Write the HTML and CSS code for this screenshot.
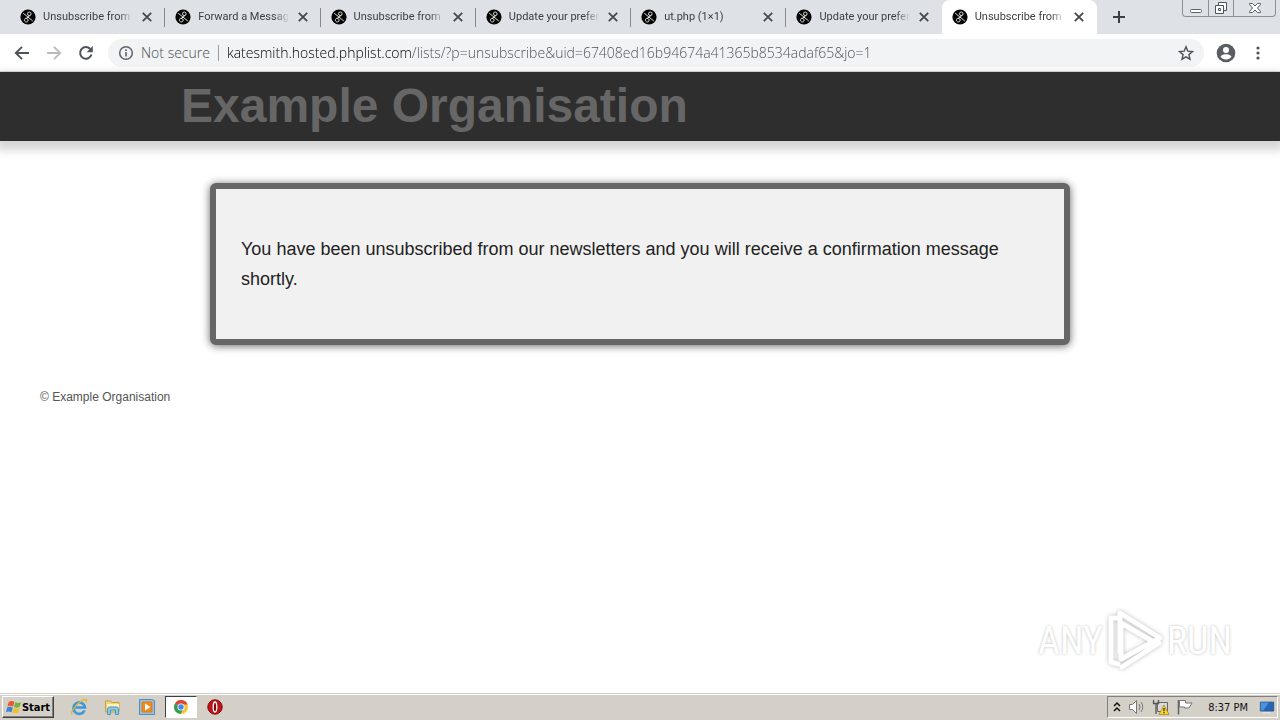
FILE: index.html
```
<!DOCTYPE html>
<html lang="en">
<head>
<meta charset="utf-8">
<title>Unsubscribe from our newsletters</title>
<link rel="stylesheet" href="styles.css">
</head>
<body>
<svg class="defs" aria-hidden="true">
  <symbol id="fav" viewBox="0 0 16 16"><circle cx="8" cy="8" r="7.6" fill="#050505"/><g fill="none" stroke="#dcdcdc" stroke-width="1"><circle cx="9.3" cy="4.8" r="1.8"/><path d="M3.2 4.2L12.8 12M10.2 6.3L6 9.7M6 9.2a1.9 1.9 0 1 0 2 2.8c.7-1.5-.7-2.8-2-2.8"/></g></symbol>
  <symbol id="x" viewBox="0 0 10 10"><path d="M1.5 1.5l7 7M8.500 1.5l-7 7" stroke="#45484d" stroke-width="1.5" fill="none"/></symbol>
</svg>
<header class="browser">
  <div class="strip">
    <nav class="tabs" aria-label="Open tabs">
      <div class="tab"><svg class="fav"><use href="#fav"/></svg><span class="name">Unsubscribe from our</span><button class="close" aria-label="Close tab"><svg><use href="#x"/></svg></button></div>
      <div class="tab"><svg class="fav"><use href="#fav"/></svg><span class="name">Forward a Message to</span><button class="close" aria-label="Close tab"><svg><use href="#x"/></svg></button></div>
      <div class="tab"><svg class="fav"><use href="#fav"/></svg><span class="name">Unsubscribe from our</span><button class="close" aria-label="Close tab"><svg><use href="#x"/></svg></button></div>
      <div class="tab"><svg class="fav"><use href="#fav"/></svg><span class="name">Update your preferences</span><button class="close" aria-label="Close tab"><svg><use href="#x"/></svg></button></div>
      <div class="tab"><svg class="fav"><use href="#fav"/></svg><span class="name">ut.php (1×1)</span><button class="close" aria-label="Close tab"><svg><use href="#x"/></svg></button></div>
      <div class="tab last"><svg class="fav"><use href="#fav"/></svg><span class="name">Update your preferences</span><button class="close" aria-label="Close tab"><svg><use href="#x"/></svg></button></div>
      <div class="tab active"><svg class="fav"><use href="#fav"/></svg><span class="name">Unsubscribe from our</span><button class="close" aria-label="Close tab"><svg><use href="#x"/></svg></button></div>
    </nav>
    <button class="new-tab" aria-label="New tab"><svg width="14" height="14" viewBox="0 0 14 14"><path d="M7 1v12M1 7h12" stroke="#3c4043" stroke-width="2"/></svg></button>
    <div class="window-controls">
      <button aria-label="Minimize"><svg width="14" height="14" viewBox="0 0 14 14"><rect x="1.500" y="8.500" width="11" height="3" rx="1" fill="#fff" stroke="#5c626c"/></svg></button>
      <button aria-label="Restore"><svg width="14" height="14" viewBox="0 0 14 14"><g fill="#fff" stroke="#4e545e"><path d="M4.500 1.500h8v8h-8z"/><path d="M1.500 4.500h8v8h-8z"/><path d="M4.500 7.500h2v2h-2z"/></g></svg></button>
      <button class="wide" aria-label="Close window"><svg width="14" height="14" viewBox="0 0 14 14"><path d="M1.500 2.500h3L7 5l2.500-2.500h3v1L9.500 7l3 3.500v1h-3L7 9l-2.500 2.500h-3v-1l3-3.500-3-3.500z" fill="#fff" stroke="#5c626c"/></svg></button>
    </div>
  </div>
  <div class="toolbar">
    <button aria-label="Back"><svg width="16" height="16" viewBox="0 0 16 16"><path d="M15 8H2.500M8 1.800L1.800 8 8 14.200" fill="none" stroke="#4f5358" stroke-width="1.900"/></svg></button>
    <button aria-label="Forward"><svg width="16" height="16" viewBox="0 0 16 16"><path d="M1 8h12.500M8 1.800L14.200 8 8 14.200" fill="none" stroke="#b9bbbe" stroke-width="1.900"/></svg></button>
    <button aria-label="Reload"><svg width="16" height="16" viewBox="0 0 16 16"><path d="M13.500 9.500A5.800 5.800 0 1 1 12.200 4" fill="none" stroke="#4f5358" stroke-width="2"/><path d="M14.800 1v6.200H8.600z" fill="#4f5358"/></svg></button>
    <div class="omnibox">
      <svg class="info" width="16" height="16" viewBox="0 0 16 16"><circle cx="8" cy="8" r="6.300" fill="none" stroke="#5f6368" stroke-width="1.500"/><path d="M8 7v4.500M8 4.300v1.600" stroke="#5f6368" stroke-width="1.600"/></svg>
      <label class="secure" for="url">Not secure</label>
      <input id="url" class="url" type="text" spellcheck="false" value="katesmith.hosted.phplist.com/lists/?p=unsubscribe&amp;uid=67408ed16b94674a41365b8534adaf65&amp;jo=1">
      <button class="star" aria-label="Bookmark this page"><svg width="16" height="16" viewBox="0 0 16 16"><path d="M8 1.800l1.800 4.300 4.700.4-3.600 3.100 1.100 4.600L8 11.800l-4 2.400 1.100-4.600-3.600-3.100 4.700-.4z" fill="none" stroke="#4f5358" stroke-width="1.400"/></svg></button>
    </div>
    <button aria-label="Profile"><svg width="20" height="20" viewBox="0 0 20 20"><circle cx="10" cy="10" r="9.300" fill="#5a5e64"/><circle cx="10" cy="7" r="3" fill="#fff"/><path d="M4.500 13.600c1-1.800 3.700-2.300 5.500-2.300s4.500.5 5.500 2.300c-1.200 1.800-3.200 2.900-5.500 2.900s-4.300-1.100-5.500-2.900z" fill="#fff"/></svg></button>
    <button aria-label="Menu"><svg width="16" height="16" viewBox="0 0 16 16"><g fill="#4f5358"><circle cx="8" cy="3" r="1.600"/><circle cx="8" cy="8" r="1.600"/><circle cx="8" cy="13" r="1.600"/></g></svg></button>
  </div>
</header>
<main class="page">
  <div class="banner"><h1>Example Organisation</h1></div>
  <section class="card"><p>You have been unsubscribed from our newsletters and you will receive a confirmation message shortly.</p></section>
  <footer class="copyright">© Example Organisation</footer>
  <div class="watermark" aria-label="ANY RUN">
    <span>ANY</span>
    <svg width="60" height="64" viewBox="0 0 60 64"><g fill="none" stroke="#fff" stroke-width="5" stroke-linejoin="round" stroke-linecap="round"><path d="M12 9H6v44l7 2M15 4v39M15 4l40 25-39 21v-36l31 18M17 58l37-24"/></g></svg>
    <span>RUN</span>
  </div>
</main>
<footer class="taskbar">
  <button class="start"><svg width="16" height="16" viewBox="0 0 17 17"><path d="M3 3q3-2 6 0L7.500 8q-3-1.500-6 0z" fill="#e8582a"/><path d="M10 3.400q3 1.500 6 0L14.500 8.500q-3 1.500-6 0z" fill="#72b443"/><path d="M1.200 9q3-1.500 6 0L6 14q-3-1.700-6 0z" fill="#3f83d4"/><path d="M8.200 9.500q3 1.500 6 0L13 14.500q-3 1.500-6 0z" fill="#f5bf2a"/></svg>Start</button>
  <div class="launch">
    <button aria-label="Internet Explorer"><svg width="18" height="18" viewBox="0 0 18 18"><path d="M14.500 12.400A5.700 5.700 0 1 1 14.900 9.500H5" fill="none" stroke="#3b9ade" stroke-width="2.700"/><path d="M2.200 16.500C-.5 14 9 3 14.500 1.500c2-.4 2.500 1 1.600 3" fill="none" stroke="#e3b432" stroke-width="1.300"/></svg></button>
    <button aria-label="Windows Explorer"><svg width="18" height="18" viewBox="0 0 18 18"><path d="M1.500 3h5l1 1.500H15V14H1.500z" fill="#f1d67d" stroke="#c99d38"/><path d="M3 6h12v4H3z" fill="#fff2b8"/><path d="M3.500 16.500V11q0-2 2-2h7q2 0 2 2v5.500h-3V12h-5v4.500z" fill="#8bc9e9" stroke="#4b94bc"/></svg></button>
    <button aria-label="Media Player"><svg width="18" height="18" viewBox="0 0 18 18"><path d="M1.500 1.500h12l3 1v14h-15z" fill="#91c3e8" stroke="#4f8fbe"/><path d="M4 4h10v10H4z" fill="#f08a1d" stroke="#e07a15"/><path d="M7 5.500l5.500 3.500L7 12.500z" fill="#fff"/></svg></button>
    <button class="pressed" aria-label="Chrome"><svg width="16" height="16" viewBox="0 0 16 16"><circle cx="8" cy="8" r="7" fill="#f5c633"/><path d="M8 8L2 4.400A7 7 0 0 1 14.600 5.500H8z" fill="#dc4437"/><path d="M8 8L2 4.400A7 7 0 0 0 7.500 15L10.500 9.500z" fill="#2f9e58"/><circle cx="8" cy="8" r="3.500" fill="#fff"/><circle cx="8" cy="8" r="2.700" fill="#4285f4"/></svg></button>
    <button aria-label="Opera"><svg width="18" height="18" viewBox="0 0 18 18"><circle cx="9" cy="9" r="7.200" fill="#c0141a" stroke="#780509"/><ellipse cx="9" cy="9" rx="1.800" ry="5" fill="#8c0509" stroke="#fff" stroke-width="1.300"/></svg></button>
  </div>
  <div class="tray">
    <svg width="10" height="14" viewBox="0 0 10 14"><path d="M2 6l3-3 3 3M2 11l3-3 3 3" fill="none" stroke="#111" stroke-width="1.500"/></svg>
    <svg width="18" height="16" viewBox="0 0 18 16"><path d="M1.500 5.500h3l4-4v13l-4-4h-3z" fill="#fff" stroke="#777"/><path d="M11 5q2 3 0 6M13 3q3.500 5 0 10" fill="none" stroke="#777"/></svg>
    <svg width="18" height="16" viewBox="0 0 18 16"><path d="M5.500 3.500h10v9h-10z" fill="#d8dade" stroke="#666"/><path d="M1.500 1v3.500h5V1M4 5v10" fill="none" stroke="#555" stroke-width="1.300"/><path d="M12 6l5 9.500H7z" fill="#ffd52d" stroke="#a48a16" stroke-width=".8"/><path d="M12 9v3.200M12 13v1.300" stroke="#222" stroke-width="1.200"/></svg>
    <svg width="18" height="16" viewBox="0 0 18 16"><path d="M2.500 1v14.500" stroke="#666" stroke-width="1.600"/><path d="M3.500 1.500h6v2.500h6.500l-3 5H8.500v-1h-5z" fill="#fff" stroke="#777"/></svg>
    <time>8:37 PM</time>
    <svg width="16" height="16" viewBox="0 0 18 16"><path d="M1.500 2.500h15v10h-15z" fill="#2765b9" stroke="#29517f"/><path d="M2 3h9L5 12H2z" fill="#4b91dd"/><path d="M4 14.500h9" stroke="#e9eef4"/></svg>
  </div>
</footer>
</body>
</html>
```
FILE: styles.css
```
* { box-sizing: border-box; }
body {
  display: flex;
  flex-direction: column;
  min-height: 100vh;
  margin: 0;
  background: #fff;
  font-family: "Liberation Sans", Arial, sans-serif;
}
button { display: flex; align-items: center; justify-content: center; padding: 0; border: 0; background: none; font: inherit; }
svg { flex: none; }
.defs { position: absolute; width: 0; height: 0; }

.browser { font-family: "Open Sans", sans-serif; }
.strip { display: flex; height: 34px; padding-left: 10px; background: #dee1e6; }
.tabs { display: flex; flex: 0 1 1087px; min-width: 0; }
.tab { display: flex; flex: 1 1 0; align-items: center; min-width: 0; padding: 0 10px; position: relative; }
.tab:not(.active):not(.last)::after { content: ""; position: absolute; top: 8px; right: 0; width: 1px; height: 19px; background: #85888d; }
.tab.active { background: #fff; border-radius: 8px 8px 0 0; }
.fav { width: 16px; height: 16px; margin-right: 7px; }
.name { flex: 1; overflow: hidden; white-space: nowrap; font-family: Roboto, sans-serif; font-size: 11px; line-height: 16px; color: #3c4043; -webkit-mask-image: linear-gradient(to right, #000 82%, transparent 98%); mask-image: linear-gradient(to right, #000 82%, transparent 98%); }
.close { width: 16px; height: 16px; margin-left: 4px; }
.close svg { width: 12px; height: 12px; }
.new-tab { width: 28px; margin-left: 8px; }
.window-controls { display: flex; align-self: flex-start; height: 17px; margin: 0 4px 0 auto; border: 1px solid #8b9097; border-top: 0; border-radius: 0 0 4px 4px; }
.window-controls button { width: 25px; }
.window-controls button + button { border-left: 1px solid #8b9097; }
.window-controls .wide { width: 42px; }

.toolbar { display: flex; align-items: center; height: 38px; padding: 0 6px; border-bottom: 1px solid #d8dadd; }
.toolbar > button { width: 32px; height: 32px; }
.omnibox { display: flex; flex: 1; align-items: center; height: 28px; margin: 0 6px; padding: 0 10px; border-radius: 14px; background: #f1f3f4; }
.secure { margin-left: 7px; padding-right: 8px; border-right: 1px solid #9a9da1; font-weight: 300; font-size: 14px; line-height: 16px; color: #4a4d52; }
.url {
  flex: 1;
  min-width: 0;
  height: 20px;
  margin-left: 8px;
  padding: 0 0 1px;
  border: 0;
  outline: 0;
  font: 300 14px "Open Sans", sans-serif;
  background: linear-gradient(to right, #000 184px, #4a4d52 184px) text;
  -webkit-text-fill-color: transparent;
  color: #202124;
}

.page { display: flex; flex: 1; flex-direction: column; position: relative; }
.banner { padding: 6px 24px 7px; background: #2e2e2e; box-shadow: 0 5px 9px 4px rgba(0, 0, 0, .17); }
.banner h1 { max-width: 918px; margin: 0 auto; font-size: 48px; line-height: 56px; color: #666; }
.card { width: calc(100% - 48px); max-width: 860px; margin: 42px auto 0; padding: 45px 25px; border: 6px solid #666; border-radius: 6px; background: #f1f1f1; box-shadow: 0 1px 8px rgba(0, 0, 0, .6); }
.card p { margin: 0; font-size: 18px; line-height: 30px; color: #222; }
.copyright { margin: 44px 40px 0; font-size: 12px; line-height: 16px; color: #555; }
.watermark { position: absolute; right: 48px; bottom: 20px; display: flex; align-items: center; gap: 2px; font-family: "Liberation Sans Narrow", "Roboto Condensed", Roboto, sans-serif; font-size: 38px; line-height: 64px; color: #fff; text-shadow: 0 0 3px #bbb; }
.watermark svg { filter: drop-shadow(0 0 2px #bbb); }

.taskbar { display: flex; align-items: center; height: 27px; padding: 0 2px; border-top: 1px solid #d4d0c8; background: #d4d0c8; box-shadow: inset 0 1px #fff; font-family: "DejaVu Sans Condensed", "DejaVu Sans", sans-serif; font-size: 11px; }
.start { width: 52px; height: 22px; border: 1px solid; border-color: #fff #404040 #404040 #fff; box-shadow: inset -1px -1px #808080; font-weight: bold; color: #000; }
.launch { display: flex; gap: 2px; margin-left: 9px; }
.launch button { width: 32px; height: 22px; }
.launch .pressed { border: 1px solid; border-color: #404040 #fff #fff #404040; background: #fff; }
.tray { display: flex; align-items: center; gap: 6px; height: 22px; margin-left: auto; padding: 0 2px 0 4px; border: 1px solid; border-color: #808080 #fff #fff #808080; }
.tray time { margin: 0 5px 0 8px; white-space: nowrap; color: #111; }
```
